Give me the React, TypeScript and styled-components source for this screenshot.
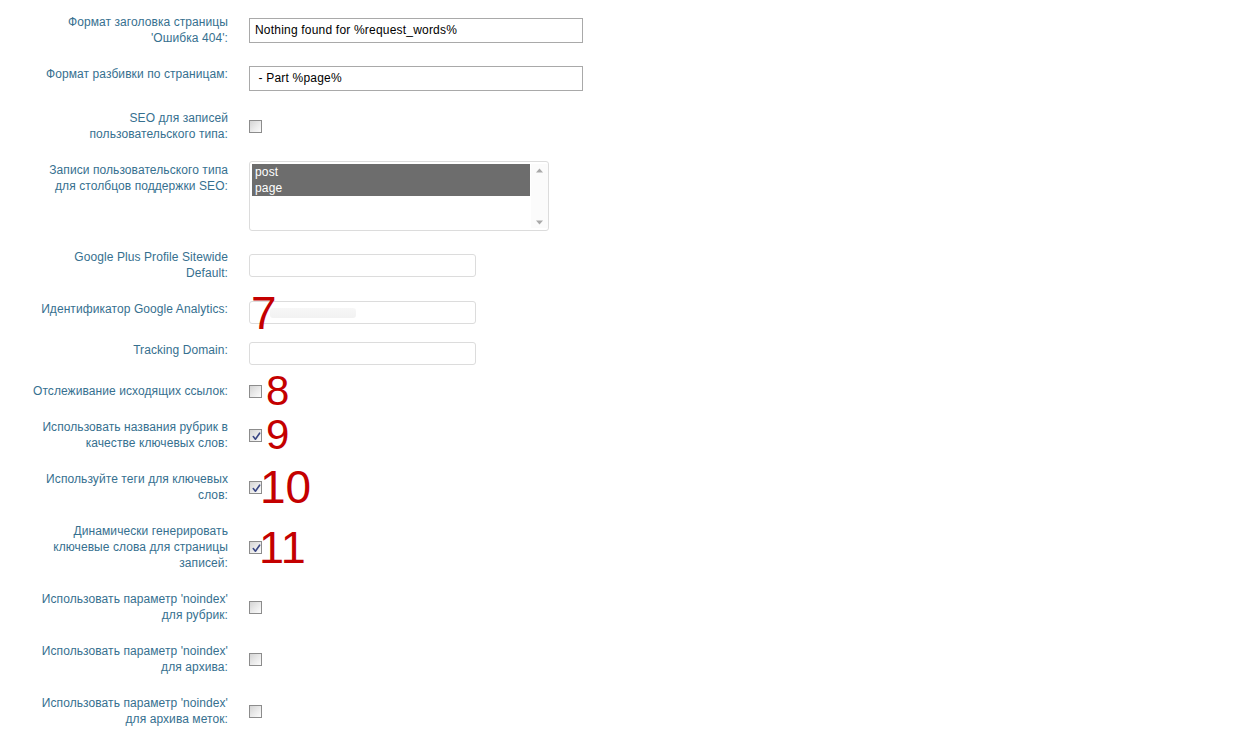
import React from "react";
import styled, { createGlobalStyle } from "styled-components";

const Global = createGlobalStyle`
  html, body { margin: 0; padding: 0; background: #fff; }
  body { font-family: "Liberation Sans", Arial, sans-serif; }
`;

const Page = styled.div`
  padding-top: 14px;
  width: 1244px;
  min-height: 745px;
  box-sizing: border-box;
`;

const Row = styled.div<{ $gap?: number; $align?: string }>`
  display: grid;
  grid-template-columns: 228px 1fr;
  column-gap: 21px;
  align-items: ${(p) => p.$align || "center"};
  margin-top: ${(p) => (p.$gap ?? 20)}px;
  &:first-child { margin-top: 0; }
`;

const Label = styled.div<{ $lift?: number; $top?: number }>`
  text-align: right;
  white-space: nowrap;
  font-size: 12px;
  line-height: 16px;
  letter-spacing: 0.08px;
  color: #36708f;
  padding-bottom: ${(p) => p.$lift || 0}px;
  padding-top: ${(p) => p.$top || 0}px;
`;

const Control = styled.div`
  position: relative;
  display: flex;
  align-items: center;
`;

const WideInput = styled.div`
  box-sizing: border-box;
  width: 334px;
  height: 25px;
  border: 1px solid #a9a9a9;
  background: #fff;
  font-size: 12px;
  line-height: 23px;
  letter-spacing: 0.2px;
  padding-left: 5px;
  color: #000;
  white-space: pre;
`;

const SoftInput = styled.div`
  box-sizing: border-box;
  width: 227px;
  height: 23px;
  border: 1px solid #dcdcdc;
  border-radius: 3px;
  background: #fff;
  position: relative;
`;

const Blurred = styled.span`
  position: absolute;
  left: 20px;
  top: 6px;
  width: 86px;
  height: 10px;
  border-radius: 3px;
  background: linear-gradient(180deg, #f7f7f7, #f2f2f2);
`;

const Check = styled.span<{ $checked?: boolean }>`
  box-sizing: border-box;
  display: block;
  width: 13px;
  height: 13px;
  border: 1px solid #8c8c8c;
  background: linear-gradient(135deg, #d4d4d4 0%, #ebebeb 55%, #fbfbfb 100%);
  position: relative;
  svg { position: absolute; left: 1px; top: 1px; }
`;

const ListBox = styled.div`
  box-sizing: border-box;
  width: 300px;
  height: 70px;
  border: 1px solid #dcdcdc;
  border-radius: 3px;
  background: #fff;
  display: flex;
  padding: 2px 0 2px 2px;
`;

const Options = styled.div`
  flex: 1;
`;

const Option = styled.div<{ $selected?: boolean }>`
  font-size: 12px;
  line-height: 16px;
  letter-spacing: 0.15px;
  padding-left: 3px;
  color: ${(p) => (p.$selected ? "#fff" : "#000")};
  background: ${(p) => (p.$selected ? "#6d6d6d" : "transparent")};
`;

const ScrollBar = styled.div`
  width: 17px;
  margin-left: 1px;
  display: flex;
  flex-direction: column;
  justify-content: space-between;
  align-items: center;
  padding: 4px 0 3px;
  background: #fbfbfb;
`;

const Badge = styled.span<{ $left: number; $size: number }>`
  position: absolute;
  left: ${(p) => p.$left}px;
  top: 50%;
  transform: translateY(-50%);
  font-family: "Liberation Sans", Arial, sans-serif;
  font-size: ${(p) => p.$size}px;
  line-height: 1;
  color: #c40000;
  pointer-events: none;
`;

const Checkbox = ({ checked }: { checked?: boolean }) => (
  <Check $checked={checked}>
    {checked && (
      <svg width="11" height="11" viewBox="0 0 11 11">
        <path d="M2.3 5.6 L4.4 8.2 L8.6 2.2" fill="none" stroke="#3a4784" strokeWidth="1.6" strokeLinecap="round" strokeLinejoin="round" />
      </svg>
    )}
  </Check>
);

const Arrow = ({ up }: { up?: boolean }) => (
  <svg width="7" height="5" viewBox="0 0 7 5">
    <path d={up ? "M0 4.5 L3.5 0.5 L7 4.5 Z" : "M0 0.5 L7 0.5 L3.5 4.5 Z"} fill="#a9a9a9" />
  </svg>
);

const Lines = ({ lines }: { lines: string[] }) => (
  <>
    {lines.map((l, i) => (
      <React.Fragment key={i}>
        {i > 0 && <br />}
        {l}
      </React.Fragment>
    ))}
  </>
);

type CheckRow = { lines: string[]; checked?: boolean; gap?: number; badge?: { text: string; left: number; size: number } };

const checkRows: CheckRow[] = [
  { lines: ["Отслеживание исходящих ссылок:"], gap: 18, badge: { text: "8", left: 17, size: 42 } },
  { lines: ["Использовать названия рубрик в", "качестве ключевых слов:"], checked: true, badge: { text: "9", left: 17, size: 42 } },
  { lines: ["Используйте теги для ключевых", "слов:"], checked: true, badge: { text: "10", left: 11, size: 46 } },
  { lines: ["Динамически генерировать", "ключевые слова для страницы", "записей:"], checked: true, badge: { text: "11", left: 10, size: 45 } },
  { lines: ["Использовать параметр 'noindex'", "для рубрик:"] },
  { lines: ["Использовать параметр 'noindex'", "для архива:"] },
  { lines: ["Использовать параметр 'noindex'", "для архива меток:"] },
];

export default function App() {
  return (
    <Page>
      <Global />
      <Row>
        <Label><Lines lines={["Формат заголовка страницы", "'Ошибка 404':"]} /></Label>
        <Control><WideInput>Nothing found for %request_words%</WideInput></Control>
      </Row>
      <Row>
        <Label $lift={9}>Формат разбивки по страницам:</Label>
        <Control><WideInput> - Part %page%</WideInput></Control>
      </Row>
      <Row $gap={19}>
        <Label><Lines lines={["SEO для записей", "пользовательского типа:"]} /></Label>
        <Control><Checkbox /></Control>
      </Row>
      <Row $gap={19} $align="start">
        <Label $top={1}><Lines lines={["Записи пользовательского типа", "для столбцов поддержки SEO:"]} /></Label>
        <Control>
          <ListBox>
            <Options>
              <Option $selected>post</Option>
              <Option $selected>page</Option>
            </Options>
            <ScrollBar>
              <Arrow up />
              <Arrow />
            </ScrollBar>
          </ListBox>
        </Control>
      </Row>
      <Row $gap={18}>
        <Label><Lines lines={["Google Plus Profile Sitewide", "Default:"]} /></Label>
        <Control><SoftInput /></Control>
      </Row>
      <Row>
        <Label $lift={7}>Идентификатор Google Analytics:</Label>
        <Control>
          <SoftInput><Blurred /></SoftInput>
          <Badge $left={2} $size={46}>7</Badge>
        </Control>
      </Row>
      <Row $gap={18}>
        <Label $lift={7}>Tracking Domain:</Label>
        <Control><SoftInput /></Control>
      </Row>
      {checkRows.map((r, i) => (
        <Row key={i} $gap={r.gap}>
          <Label><Lines lines={r.lines} /></Label>
          <Control>
            <Checkbox checked={r.checked} />
            {r.badge && <Badge $left={r.badge.left} $size={r.badge.size}>{r.badge.text}</Badge>}
          </Control>
        </Row>
      ))}
    </Page>
  );
}
